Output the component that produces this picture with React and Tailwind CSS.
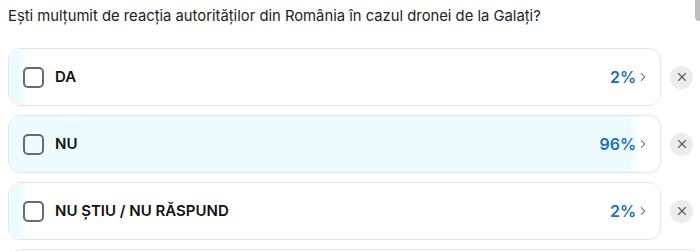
import { X, ChevronRight } from 'lucide-react';

const options = [
    { label: 'DA', pct: 2 },
    { label: 'NU', pct: 96 },
    { label: 'NU ȘTIU / NU RĂSPUND', pct: 2 },
];

function OptionRow({ label, pct }) {
    return (
        <div className="flex items-center">
            <div className="relative flex-1 h-[58px] rounded-xl border border-[#e3e6e8] bg-white overflow-hidden">
                {/* bara de procent */}
                <div
                    className="absolute inset-y-0 left-0"
                    style={{
                        width: `calc(${pct}% + 6px)`,
                        background: 'linear-gradient(to right, #ecfcfe calc(100% - 10px), rgba(236,252,254,0))',
                    }}
                />
                <div className="relative flex items-center h-full pl-[14px] pr-[10px]">
                    <span className="w-[21px] h-[21px] rounded-[5px] border-2 border-[#6a6a6a] shrink-0" />
                    <span className="ml-[11px] text-[15px] font-semibold text-[#111]">{label}</span>
                    <span className="ml-auto text-[16px] font-semibold text-[#1d6cc4]">{pct}%</span>
                    <ChevronRight size={14} strokeWidth={1.75} className="text-[#555]" />
                </div>
            </div>
            <button className="ml-[9px] mr-[7px] w-[23px] h-[23px] rounded-full bg-[#ececee] flex items-center justify-center">
                <X size={14} strokeWidth={2} className="text-[#5f5f5f]" />
            </button>
        </div>
    );
}

export default function App() {
    return (
        <div className="relative w-[700px] h-[252px] overflow-hidden bg-white font-['Inter',sans-serif]">
            <div className="absolute right-0 top-0 w-[5px] h-[21px] bg-[#bdbdbd] rounded-bl-sm" />
            <div className="pl-[8px] pt-[6px]">
                <h2 className="text-[14.8px] leading-[20px] text-[#222]">
                    Ești mulțumit de reacția autorităților din România în cazul dronei de la Galați?
                </h2>
                <div className="mt-[22px] flex flex-col gap-[9px]">
                    {options.map((o) => (
                        <OptionRow key={o.label} label={o.label} pct={o.pct} />
                    ))}
                    <div className="ml-[2px] h-[58px] rounded-xl border border-[#e3e6e8] bg-white" />
                </div>
            </div>
        </div>
    );
}
